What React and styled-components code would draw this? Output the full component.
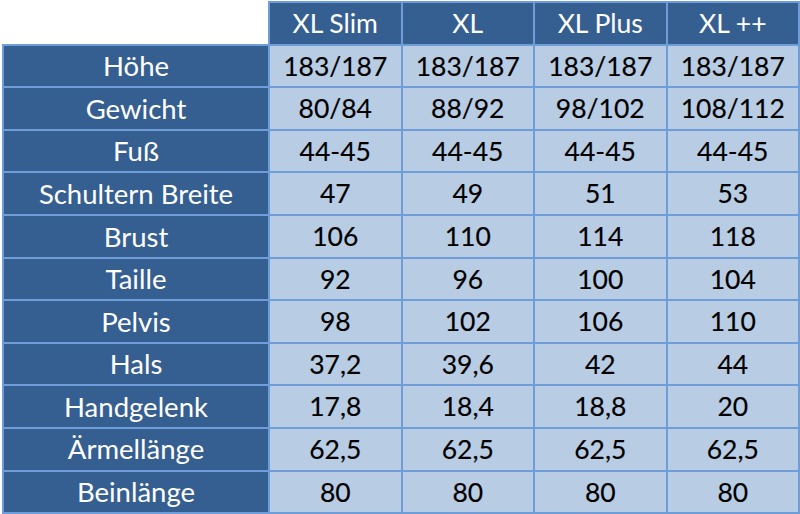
import React from "react";
import styled, { createGlobalStyle } from "styled-components";

const GlobalStyle = createGlobalStyle`
	body {
		margin: 0;
		background: #ffffff;
		font-family: Lato, "Open Sans", sans-serif;
	}
`;

//Data
const sizes = ["XL Slim", "XL", "XL Plus", "XL ++"];
const rows = [
	["Höhe", "183/187", "183/187", "183/187", "183/187"],
	["Gewicht", "80/84", "88/92", "98/102", "108/112"],
	["Fuß", "44-45", "44-45", "44-45", "44-45"],
	["Schultern Breite", "47", "49", "51", "53"],
	["Brust", "106", "110", "114", "118"],
	["Taille", "92", "96", "100", "104"],
	["Pelvis", "98", "102", "106", "110"],
	["Hals", "37,2", "39,6", "42", "44"],
	["Handgelenk", "17,8", "18,4", "18,8", "20"],
	["Ärmellänge", "62,5", "62,5", "62,5", "62,5"],
	["Beinlänge", "80", "80", "80", "80"],
];

const App = () => {
	return (
		<>
			<GlobalStyle />
			<Table>
				<colgroup>
					<col style={{ width: "266px" }} />
					{sizes.map((s) => (
						<col key={s} style={{ width: "132.5px" }} />
					))}
				</colgroup>
				<thead>
					<Row>
						<Corner />
						{sizes.map((s) => (
							<Cell key={s} dark>
								{s}
							</Cell>
						))}
					</Row>
				</thead>
				<tbody>
					{rows.map(([label, ...values]) => (
						<Row key={label}>
							<Cell dark wide>
								{label}
							</Cell>
							{values.map((v, i) => (
								<Cell key={i}>{v}</Cell>
							))}
						</Row>
					))}
				</tbody>
			</Table>
		</>
	);
};

const Table = styled.table`
	border-collapse: collapse;
	table-layout: fixed;
	width: 797px;
	margin: 1px 0 0 2px;
`;

const Row = styled.tr`
	height: 42.6px;
`;

const Cell = styled.td`
	padding: 0;
	border: 2px solid #6e9dda;
	text-align: center;
	vertical-align: middle;
	font-size: ${(p) => (p.wide ? "27.5px" : "26.5px")};
	line-height: 1;
	white-space: nowrap;
	-webkit-text-stroke: ${(p) => (p.dark ? "0" : "0.15px #000000")};
	background: ${(p) => (p.dark ? "#365f91" : "#b8cce4")};
	color: ${(p) => (p.dark ? "#ffffff" : "#000000")};
`;

const Corner = styled.td`
	padding: 0;
	border-top: none;
	border-left: none;
	background: #ffffff;
`;

export default App;
